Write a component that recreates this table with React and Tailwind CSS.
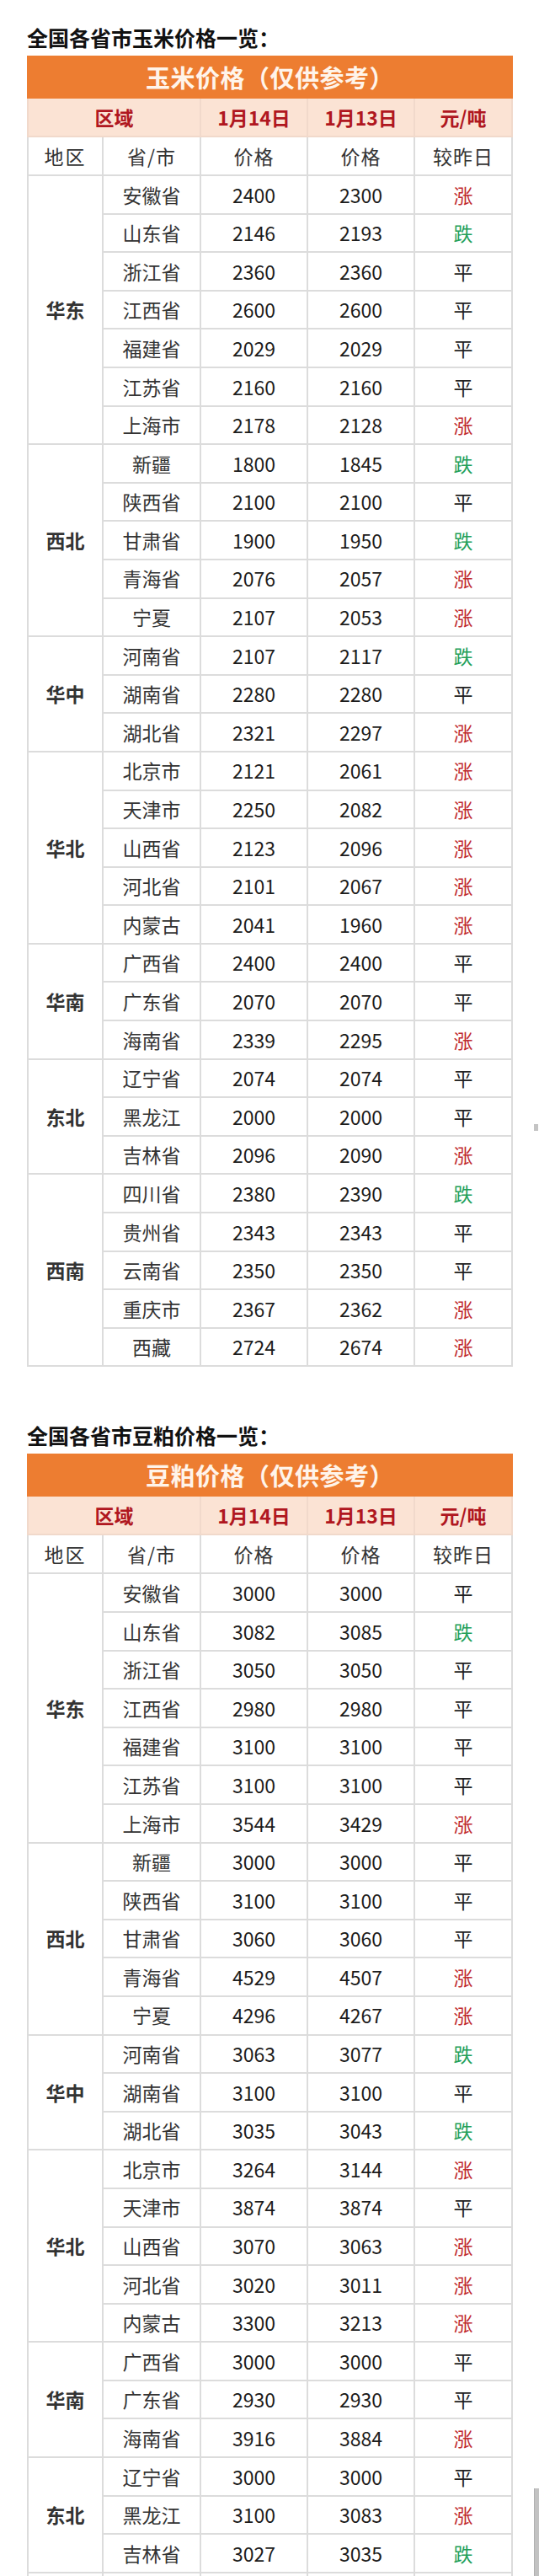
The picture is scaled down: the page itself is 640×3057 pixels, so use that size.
import React from "react";

const corn = [
  ["华东", [
    ["安徽省", "2400", "2300", "涨"],
    ["山东省", "2146", "2193", "跌"],
    ["浙江省", "2360", "2360", "平"],
    ["江西省", "2600", "2600", "平"],
    ["福建省", "2029", "2029", "平"],
    ["江苏省", "2160", "2160", "平"],
    ["上海市", "2178", "2128", "涨"],
  ]],
  ["西北", [
    ["新疆", "1800", "1845", "跌"],
    ["陕西省", "2100", "2100", "平"],
    ["甘肃省", "1900", "1950", "跌"],
    ["青海省", "2076", "2057", "涨"],
    ["宁夏", "2107", "2053", "涨"],
  ]],
  ["华中", [
    ["河南省", "2107", "2117", "跌"],
    ["湖南省", "2280", "2280", "平"],
    ["湖北省", "2321", "2297", "涨"],
  ]],
  ["华北", [
    ["北京市", "2121", "2061", "涨"],
    ["天津市", "2250", "2082", "涨"],
    ["山西省", "2123", "2096", "涨"],
    ["河北省", "2101", "2067", "涨"],
    ["内蒙古", "2041", "1960", "涨"],
  ]],
  ["华南", [
    ["广西省", "2400", "2400", "平"],
    ["广东省", "2070", "2070", "平"],
    ["海南省", "2339", "2295", "涨"],
  ]],
  ["东北", [
    ["辽宁省", "2074", "2074", "平"],
    ["黑龙江", "2000", "2000", "平"],
    ["吉林省", "2096", "2090", "涨"],
  ]],
  ["西南", [
    ["四川省", "2380", "2390", "跌"],
    ["贵州省", "2343", "2343", "平"],
    ["云南省", "2350", "2350", "平"],
    ["重庆市", "2367", "2362", "涨"],
    ["西藏", "2724", "2674", "涨"],
  ]],
];

const soy = [
  ["华东", [
    ["安徽省", "3000", "3000", "平"],
    ["山东省", "3082", "3085", "跌"],
    ["浙江省", "3050", "3050", "平"],
    ["江西省", "2980", "2980", "平"],
    ["福建省", "3100", "3100", "平"],
    ["江苏省", "3100", "3100", "平"],
    ["上海市", "3544", "3429", "涨"],
  ]],
  ["西北", [
    ["新疆", "3000", "3000", "平"],
    ["陕西省", "3100", "3100", "平"],
    ["甘肃省", "3060", "3060", "平"],
    ["青海省", "4529", "4507", "涨"],
    ["宁夏", "4296", "4267", "涨"],
  ]],
  ["华中", [
    ["河南省", "3063", "3077", "跌"],
    ["湖南省", "3100", "3100", "平"],
    ["湖北省", "3035", "3043", "跌"],
  ]],
  ["华北", [
    ["北京市", "3264", "3144", "涨"],
    ["天津市", "3874", "3874", "平"],
    ["山西省", "3070", "3063", "涨"],
    ["河北省", "3020", "3011", "涨"],
    ["内蒙古", "3300", "3213", "涨"],
  ]],
  ["华南", [
    ["广西省", "3000", "3000", "平"],
    ["广东省", "2930", "2930", "平"],
    ["海南省", "3916", "3884", "涨"],
  ]],
  ["东北", [
    ["辽宁省", "3000", "3000", "平"],
    ["黑龙江", "3100", "3083", "涨"],
    ["吉林省", "3027", "3035", "跌"],
  ]],
  ["", [
    ["", "", "", ""],
  ]],
];

const cell = "border-2 border-[#dcdcdc] text-center align-middle p-0";

function trendColor(t) {
  if (t === "涨") return "text-[#bf2a2f]";
  if (t === "跌") return "text-[#23a05a]";
  return "text-[#222222]";
}

function PriceTable({ title, data }) {
  return (
    <table className="table-fixed border-collapse w-[575px]">
      <colgroup>
        <col className="w-[89px]" />
        <col className="w-[116px]" />
        <col className="w-[127px]" />
        <col className="w-[127px]" />
        <col className="w-[116px]" />
      </colgroup>
      <tbody>
        <tr className="h-[49px]">
          <td
            colSpan={5}
            className="border-2 border-[#ed7d31] bg-[#ed7d31] text-center align-middle p-0 text-[29px] font-bold text-[#fff4ea] tracking-[0.5px]"
          >
            {title}
          </td>
        </tr>
        <tr className="h-[46px] bg-[#fbe3d4]">
          <td colSpan={2} className={`${cell} border-[#f1d9cb] text-[23px] font-bold text-[#b0171f]`}>区域</td>
          <td className={`${cell} border-[#f1d9cb] text-[23px] font-bold text-[#b0171f]`}>1月14日</td>
          <td className={`${cell} border-[#f1d9cb] text-[23px] font-bold text-[#b0171f]`}>1月13日</td>
          <td className={`${cell} border-[#f1d9cb] text-[23px] font-bold text-[#b0171f]`}>元/吨</td>
        </tr>
        <tr className="h-[46px]">
          <td className={`${cell} text-[23px] text-[#333333] tracking-[2px]`}>地区</td>
          <td className={`${cell} text-[23px] text-[#333333] tracking-[1px]`}>省/市</td>
          <td className={`${cell} text-[23px] text-[#333333] tracking-[1px]`}>价格</td>
          <td className={`${cell} text-[23px] text-[#333333] tracking-[1px]`}>价格</td>
          <td className={`${cell} text-[23px] text-[#333333] tracking-[1px]`}>较昨日</td>
        </tr>
        {data.map(([region, rows], gi) =>
          rows.map((r, i) => (
            <tr key={gi + "-" + i} className="h-[45.6px]">
              {i === 0 && (
                <td rowSpan={rows.length} className={`${cell} text-[23px] font-bold text-[#333333]`}>
                  {region}
                </td>
              )}
              <td className={`${cell} text-[23px] text-[#333333]`}>{r[0]}</td>
              <td className={`${cell} text-[23px] text-[#1c1c1c]`}>{r[1]}</td>
              <td className={`${cell} text-[23px] text-[#1c1c1c]`}>{r[2]}</td>
              <td className={`${cell} text-[23px] ${trendColor(r[3])}`}>{r[3]}</td>
            </tr>
          ))
        )}
      </tbody>
    </table>
  );
}

export default function App() {
  return (
    <div
      className="relative w-[640px] h-[3057px] overflow-hidden bg-white"
      style={{ fontFamily: '"Noto Sans CJK SC", "Noto Sans", sans-serif' }}
    >
      <div className="pl-[32px] pt-[29px]">
        <h2 className="h-[30px] leading-[30px] text-[25px] font-bold text-[#111111] mb-[7px]">
          全国各省市玉米价格一览：
        </h2>
        <PriceTable title="玉米价格（仅供参考）" data={corn} />
        <h2 className="mt-[66px] h-[30px] leading-[30px] text-[25px] font-bold text-[#111111] mb-[7px]">
          全国各省市豆粕价格一览：
        </h2>
        <PriceTable title="豆粕价格（仅供参考）" data={soy} />
      </div>
      <div className="absolute right-[1px] top-[1334px] w-[5px] h-[8px] bg-[#c4c4c4]" />
      <div className="absolute right-0 top-[2953px] w-[6px] h-[104px] bg-[#c2c2c2] border-l border-[#b0b0b0]" />
    </div>
  );
}
